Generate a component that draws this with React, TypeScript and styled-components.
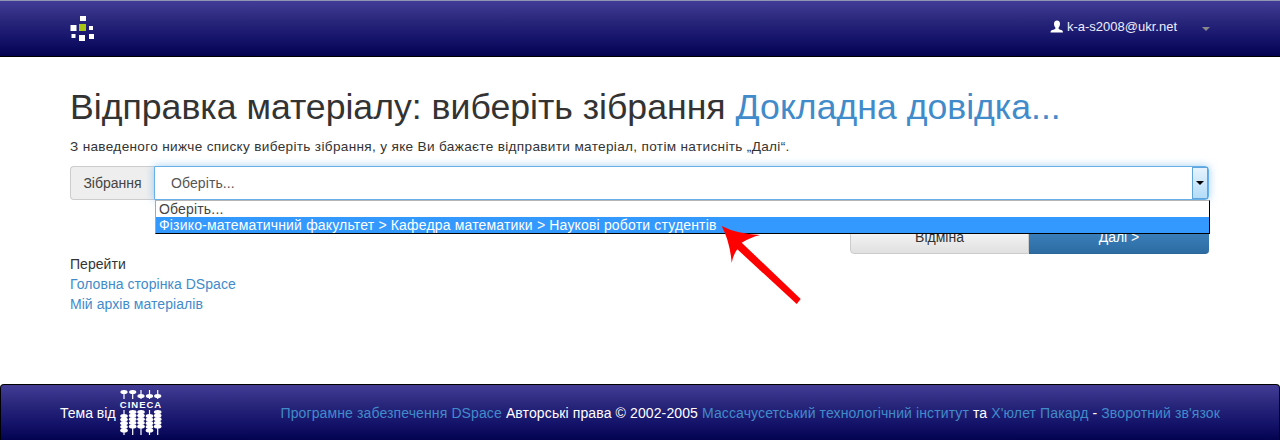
import React from "react";
import styled, { createGlobalStyle } from "styled-components";

const Global = createGlobalStyle`
  html, body { margin: 0; padding: 0; background: #fff; }
  body { font-family: "Liberation Sans", Arial, sans-serif; font-size: 14px; line-height: 20px; color: #333; }
  * { box-sizing: border-box; }
  a { color: #428bca; text-decoration: none; }
`;

const Page = styled.div`
  position: relative;
  width: 1280px;
  height: 440px;
  overflow: hidden;
  display: flex;
  flex-direction: column;
`;

const navGradient = "linear-gradient(to bottom, #423c96 0%, #29277c 35%, #14136a 70%, #020250 100%)";

const Header = styled.header`
  height: 57px;
  flex: none;
  background: ${navGradient};
  border-top: 1px solid #8f96b4;
  border-bottom: 1px solid #000;
  display: flex;
  align-items: center;
  justify-content: space-between;
  padding: 0 70px;
`;

const UserMenu = styled.div`
  display: flex;
  align-items: center;
  color: #fff;
  font-size: 13px;
  margin-top: -3px;
`;

const UserName = styled.span`
  margin-left: 3px;
  color: #eef;
`;

const Caret = styled.span`
  width: 0;
  height: 0;
  margin-left: 25px;
  margin-top: 3px;
  border-left: 4px solid transparent;
  border-right: 4px solid transparent;
  border-top: 4px solid #888;
`;

const Main = styled.main`
  padding: 0 71px 0 70px;
  flex: 1;
`;

const Title = styled.h1`
  margin: 27px 0 0;
  font-size: 35.64px;
  line-height: 46px;
  font-weight: 500;
  color: #333;
  white-space: nowrap;
`;

const Intro = styled.p`
  margin: 7px 0 0;
  font-size: 13.6px;
  line-height: 20px;
  letter-spacing: 0.33px;
  white-space: nowrap;
`;

const InputGroup = styled.div`
  margin-top: 9px;
  display: flex;
  height: 34px;
`;

const Addon = styled.div`
  width: 84px;
  flex: none;
  display: flex;
  align-items: center;
  justify-content: center;
  background: #eee;
  border: 1px solid #ccc;
  border-right: 0;
  border-radius: 4px 0 0 4px;
  color: #444;
  font-size: 14px;
`;

const SelectBox = styled.div`
  flex: 1;
  display: flex;
  align-items: center;
  justify-content: space-between;
  padding-left: 16px;
  background: #fff;
  border: 1px solid #66afe9;
  border-radius: 0 4px 4px 0;
  box-shadow: 0 0 8px rgba(102, 175, 233, 0.6);
  color: #555;
  font-size: 14px;
  letter-spacing: 0.1px;
`;

const SelectButton = styled.span`
  width: 16px;
  height: 32px;
  display: flex;
  align-items: center;
  justify-content: center;
  background: linear-gradient(to bottom, #e6f3fd, #b4dcf8);
  border: 1px solid #fff;
  outline: 1px solid #5fa5dc;
  outline-offset: -1px;
`;

const SelectArrow = styled.span`
  width: 0;
  height: 0;
  border-left: 4px solid transparent;
  border-right: 4px solid transparent;
  border-top: 4px solid #000;
`;

const Dropdown = styled.ul`
  position: absolute;
  left: 155px;
  top: 200px;
  width: 1055px;
  height: 34px;
  margin: 0;
  padding: 0;
  list-style: none;
  background: #fff;
  border-top: 1px solid #b5b5b5;
  border-left: 1px solid #a8a8a8;
  border-right: 1px solid #000;
  border-bottom: 1px solid #000;
  z-index: 2;
`;

const Option = styled.li<{ $active?: boolean }>`
  height: 16px;
  line-height: 16px;
  padding-left: 3px;
  background: ${(p) => (p.$active ? "#3399ff" : "#fff")};
  color: ${(p) => (p.$active ? "#fff" : "#444")};
  font-size: 14px;
  letter-spacing: 0.17px;
`;

const Buttons = styled.div`
  margin: 20px 0 0 780px;
  display: flex;
  height: 34px;
`;

const Button = styled.div<{ $primary?: boolean }>`
  width: ${(p) => (p.$primary ? "180px" : "179px")};
  display: flex;
  align-items: center;
  justify-content: center;
  font-size: 14px;
  color: ${(p) => (p.$primary ? "#fff" : "#333")};
  background: ${(p) =>
    p.$primary ? "linear-gradient(to bottom, #428bca, #2d6ca2)" : "linear-gradient(to bottom, #fff, #e0e0e0)"};
  border: 1px solid ${(p) => (p.$primary ? "#2b669a" : "#ccc")};
  border-radius: ${(p) => (p.$primary ? "0 4px 4px 0" : "4px 0 0 4px")};
  ${(p) => (p.$primary ? "border-width: 0 0 1px 0;" : "")}
`;

const GoTo = styled.nav`
  display: flex;
  flex-direction: column;
  align-items: flex-start;
  letter-spacing: 0.05px;
`;

const Footer = styled.footer`
  height: 56px;
  flex: none;
  background: ${navGradient};
  border: 1px solid #000;
  border-bottom: 0;
  border-radius: 4px 4px 0 0;
  display: flex;
  align-items: center;
  padding: 0 59px;
  color: #fff;
  font-size: 14px;
`;

const ThemeBy = styled.span`
  margin-right: 3px;
  color: #fff;
`;

const Credits = styled.div`
  margin-left: auto;
  white-space: nowrap;
  letter-spacing: 0.115px;
`;

const FooterLink = styled.a`
  color: #428bca;
`;

const PointerArrow = styled.svg`
  position: absolute;
  left: 715px;
  top: 220px;
  z-index: 3;
`;

const Logo = () => (
  <svg width="26" height="26" viewBox="0 0 26 26" style={{ display: "block", marginTop: -1 }}>
    <g fill="#fff">
      <rect x="10" y="1" width="6" height="5" />
      <rect x="0.5" y="10" width="6" height="6" />
      <rect x="19" y="11" width="4" height="4" />
      <rect x="1.5" y="19" width="4" height="4" />
      <rect x="9" y="20" width="6" height="6" />
      <rect x="19" y="19" width="5" height="5" />
    </g>
    <rect x="9" y="9" width="7" height="7" fill="#a8c514" />
  </svg>
);

const UserIcon = () => (
  <svg width="14" height="14" viewBox="0 0 14 14" style={{ display: "block" }}>
    <path
      fill="#fff"
      d="M7 0.5c2 0 3 1.5 3 3.2 0 1.6-.7 3.1-1.4 3.8v1c0 .6 1 .9 2.600 1.600 1 .4 1.800.9 1.800 2.400H0.500c0-1.500.8-2 1.800-2.400C3.900 9.400 5.400 9.100 5.400 8.500v-1C4.700 6.800 4 5.300 4 3.700 4 2 5 .5 7 .5z"
    />
  </svg>
);

const rods = [
  { x: 5, up: 3, low: 27 },
  { x: 13.7, up: 3, low: 23 },
  { x: 22, up: 7, low: 23 },
  { x: 30.5, up: 7, low: 27 },
  { x: 38.7, up: 7, low: 23 },
];

const Abacus = () => (
  <svg width="44" height="47" viewBox="0 0 44 47" style={{ display: "block", flex: "none" }}>
    {rods.map((r) => (
      <g key={r.x} fill="#fff">
        <rect x={r.x - 0.6} y="1" width="1.2" height="9" />
        <ellipse cx={r.x} cy={r.up} rx="3.600" ry="2" />
        <rect x={r.x - 0.6} y="21" width="1.2" height="25" />
        {[0, 1, 2, 3, 4].map((j) => (
          <ellipse key={j} cx={r.x} cy={r.low + j * 3.6} rx="3.800" ry="2.100" />
        ))}
      </g>
    ))}
    <text x="22" y="18.500" textAnchor="middle" fill="#fff" fontFamily="Liberation Sans" fontWeight="700" fontSize="9.500" letterSpacing="1">
      CINECA
    </text>
  </svg>
);

export default function App() {
  return (
    <Page>
      <Global />
      <Header>
        <Logo />
        <UserMenu>
          <UserIcon />
          <UserName>k-a-s2008@ukr.net</UserName>
          <Caret />
        </UserMenu>
      </Header>
      <Main>
        <Title>
          Відправка матеріалу: виберіть зібрання <a href="#help">Докладна довідка...</a>
        </Title>
        <Intro>З наведеного нижче списку виберіть зібрання, у яке Ви бажаєте відправити матеріал, потім натисніть „Далі“.</Intro>
        <InputGroup>
          <Addon>Зібрання</Addon>
          <SelectBox>
            Оберіть...
            <SelectButton>
              <SelectArrow />
            </SelectButton>
          </SelectBox>
        </InputGroup>
        <Buttons>
          <Button>Відміна</Button>
          <Button $primary>Далі &gt;</Button>
        </Buttons>
        <GoTo>
          <span>Перейти</span>
          <a href="#home">Головна сторінка DSpace</a>
          <a href="#mine">Мій архів матеріалів</a>
        </GoTo>
      </Main>
      <Dropdown>
        <Option>Оберіть...</Option>
        <Option $active>Фізико-математичний факультет &gt; Кафедра математики &gt; Наукові роботи студентів</Option>
      </Dropdown>
      <PointerArrow width="100" height="90" viewBox="0 0 100 90">
        <path fill="#ff0000" d="M6.700 6 Q22 14 45 15 Q34 18 26.700 22.700 L85.700 79 L81.700 84 L22.300 29.300 Q18 35 16.700 43 Q15 22 6.700 6 Z" />
      </PointerArrow>
      <Footer>
        <ThemeBy>Тема від</ThemeBy>
        <Abacus />
        <Credits>
          <FooterLink href="#d">Програмне забезпечення DSpace</FooterLink> Авторські права © 2002-2005{" "}
          <FooterLink href="#m">Массачусетський технологічний інститут</FooterLink> та{" "}
          <FooterLink href="#h">Х'юлет Пакард</FooterLink> - <FooterLink href="#f">Зворотний зв'язок</FooterLink>
        </Credits>
      </Footer>
    </Page>
  );
}
